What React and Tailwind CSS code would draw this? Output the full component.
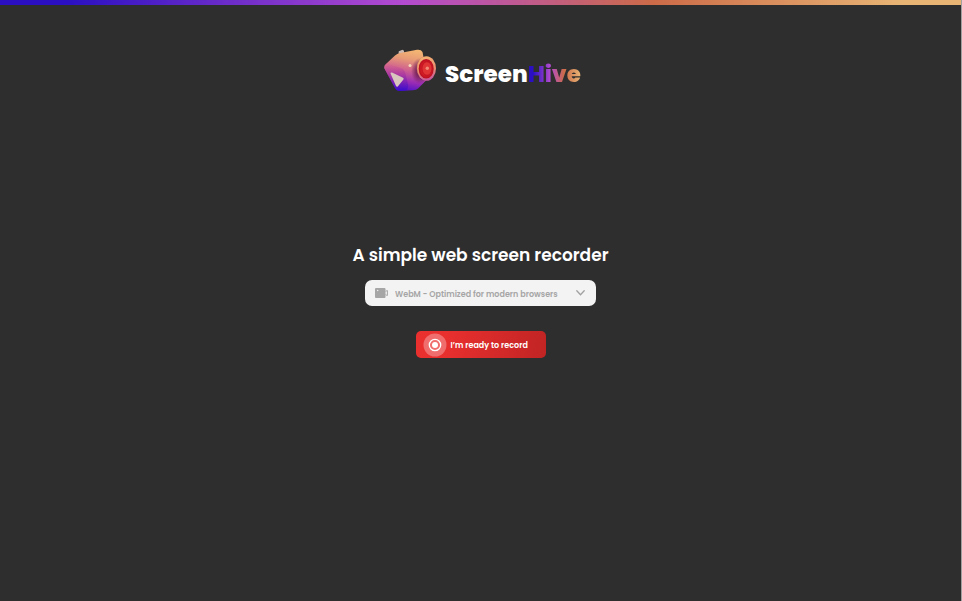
import React from "react";

function CameraLogo() {
  return (
    <svg className="h-[42px] w-[52px] shrink-0" viewBox="0 0 52 42" aria-hidden="true">
      <defs>
        <linearGradient id="body" x1="0.6" y1="0" x2="0.42" y2="1">
          <stop offset="0" stopColor="#f3b673" />
          <stop offset="0.22" stopColor="#e89c76" />
          <stop offset="0.48" stopColor="#d0628e" />
          <stop offset="0.76" stopColor="#9a2cb4" />
          <stop offset="1" stopColor="#4a10c8" />
        </linearGradient>
        <linearGradient id="side" x1="0.5" y1="0" x2="0.55" y2="1">
          <stop offset="0" stopColor="#d8688c" />
          <stop offset="0.4" stopColor="#a8329f" />
          <stop offset="1" stopColor="#2c08d0" />
        </linearGradient>
        <linearGradient id="rim" x1="0.3" y1="0" x2="0.5" y2="1">
          <stop offset="0" stopColor="#f5b574" />
          <stop offset="0.6" stopColor="#ea8c70" />
          <stop offset="1" stopColor="#c455a0" />
        </linearGradient>
        <linearGradient id="barrel" x1="0" y1="0" x2="0" y2="1">
          <stop offset="0" stopColor="#dc8054" />
          <stop offset="1" stopColor="#6c1060" />
        </linearGradient>
        <radialGradient id="glass">
          <stop offset="0" stopColor="#f04a40" />
          <stop offset="0.55" stopColor="#dc2228" />
          <stop offset="1" stopColor="#b90d20" />
        </radialGradient>
        <radialGradient id="shade">
          <stop offset="0.3" stopColor="#5b1048" stopOpacity="0.8" />
          <stop offset="1" stopColor="#5b1048" stopOpacity="0" />
        </radialGradient>
      </defs>
      <path d="M14.500 5l.3-2.700 3.700-1.500 1.500 1v3z" fill="#cbb9b3" />
      <path d="M2.500 14.500 L11 6.500 Q13 4.500 16 4 L33 .8 Q37 .2 38.500 3 L43 26 Q44 30 41 32.500 L34 39.500 Q32.500 41 29 41.200 L16 42 Q12.500 42 11 39 L.7 20 Q-.8 17 2.500 14.500Z" fill="url(#body)" />
      <path d="M2.500 14.500 Q-.8 17 .7 20 L11 39 Q12.500 42 16 42 L22 41.600 Q25 39 24 35 L21 23 Q20 20 17 19Z" fill="url(#side)" opacity=".6" />
      <ellipse cx="35.500" cy="22" rx="8.500" ry="13" fill="url(#shade)" />
      <path d="M6.500 24.500 Q6.500 23 8 23.600 L19 28.700 Q20.300 29.500 19.400 30.600 L14 37.200 Q12.800 38.300 12 37Z" fill="#d8c5bd" />
      <circle cx="26" cy="16.500" r="1.500" fill="#f7d7ba" />
      <ellipse cx="40.500" cy="19.800" rx="8" ry="11.700" fill="url(#barrel)" />
      <ellipse cx="42.500" cy="19.500" rx="9.500" ry="12.300" fill="url(#rim)" />
      <ellipse cx="42.200" cy="19.800" rx="7.500" ry="9.800" fill="url(#glass)" />
      <ellipse cx="43" cy="19.500" rx="5" ry="6.800" fill="#df3433" stroke="#b90d20" strokeWidth=".7" />
      <circle cx="43.300" cy="19.200" r="1.700" fill="#f28a75" />
    </svg>
  );
}

function CameraIcon() {
  return (
    <svg className="pointer-events-none col-start-1 row-start-1 ml-[10px] h-[10px] w-[13px]" viewBox="0 0 13 10" aria-hidden="true">
      <rect width="10.500" height="10" rx="1" fill="#a6a6a6" />
      <path d="M10.500 3.300 12.400 2.500v5l-1.900-.8" fill="none" stroke="#a6a6a6" />
      <circle cx="2.700" cy="2.500" r=".7" fill="#f3f3f3" />
    </svg>
  );
}

function RecordIcon() {
  return (
    <svg className="size-6 shrink-0" viewBox="0 0 24 24" aria-hidden="true">
      <circle cx="12" cy="12" r="11.500" fill="#fff" fillOpacity=".3" />
      <circle cx="12" cy="12" r="5.700" fill="none" stroke="#fff" strokeWidth="1.300" />
      <circle cx="12" cy="12" r="3" fill="#fff" />
    </svg>
  );
}

export default function App() {
  return (
    <div className="flex min-h-screen flex-col border-r border-[#a0a0a0] bg-[#2e2e2e] font-['Poppins','Inter',sans-serif] text-white">
      <div className="h-[5px] bg-[linear-gradient(90deg,#2a10c2_7%,#b44bd0_42%,#cc6b48_68%,#e8b575_94%)]" />
      <header className="flex items-center justify-center gap-[9px] pt-11 pl-1">
        <CameraLogo />
        <div className="pt-2 text-[23px] leading-8 font-extrabold">
          Screen
          <span className="bg-[linear-gradient(90deg,#2a10c2_10%,#b44bd0_42%,#cc6b48_68%,#e8b575_100%)] bg-clip-text text-transparent">Hive</span>
        </div>
      </header>
      <main className="flex flex-col items-center pt-[150px]">
        <h1 className="text-[17px] leading-7 font-semibold">A simple web screen recorder</h1>
        <label htmlFor="format" className="mt-[11px] grid w-[231px] items-center">
          <select
            id="format"
            aria-label="Video format"
            disabled
            className="col-start-1 row-start-1 h-[26px] w-full appearance-none rounded-[7px] bg-[#f3f3f3] pt-[3px] pl-[30px] text-[8px] leading-4 font-semibold text-[#a6a6a6] opacity-100"
          >
            <option>WebM - Optimized for modern browsers</option>
          </select>
          <CameraIcon />
          <svg className="pointer-events-none col-start-1 row-start-1 mr-[11px] h-[6px] w-[9px] justify-self-end" viewBox="0 0 9 6" aria-hidden="true">
            <path d="m.8.800 3.700 4 3.700-4" fill="none" stroke="#a0a0a0" strokeWidth="1.300" strokeLinecap="round" />
          </svg>
        </label>
        <button className="mt-[25px] flex h-[27px] w-[130px] items-center gap-1 rounded-[5px] bg-[linear-gradient(100deg,#ea302f_20%,#c12424)] pl-[7px] text-[8px] font-semibold">
          <RecordIcon />
          <span className="pt-0.5">I’m ready to record</span>
        </button>
      </main>
    </div>
  );
}
